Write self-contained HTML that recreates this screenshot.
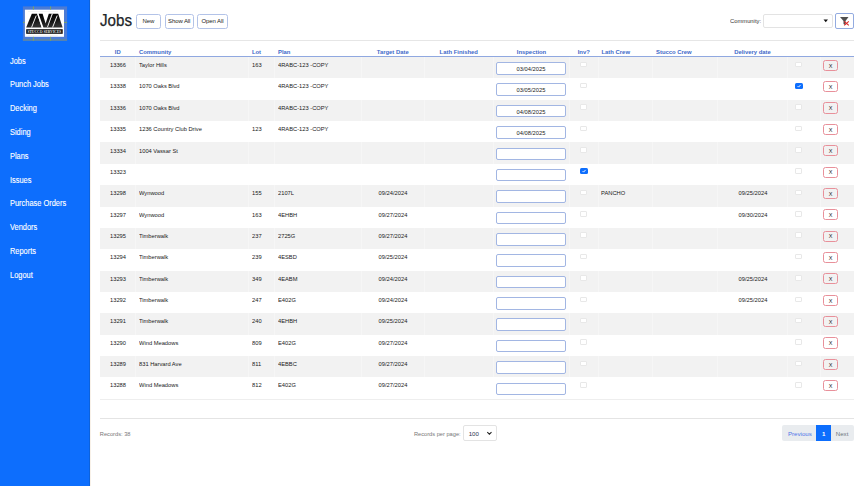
<!DOCTYPE html>
<html><head><meta charset="utf-8"><style>
html,body{margin:0;padding:0;}
body{width:864px;height:486px;overflow:hidden;position:relative;background:#fff;font-family:"Liberation Sans", sans-serif;}
</style></head><body>
<div style="position:absolute;left:0;top:0;width:90px;height:486px;background:#0d6efd;"></div>
<div style="position:absolute;left:89px;top:0;width:1px;height:486px;background:#0b62dd;"></div>
<div style="position:absolute;left:90px;top:0;width:1px;height:486px;background:#f8f1e8;"></div>
<svg style="position:absolute;left:22px;top:6px" width="46" height="36" viewBox="0 0 46 36">
<rect x="0.9" y="0.4" width="44.2" height="34.4" fill="#4c7bd4"/>
<rect x="0.9" y="33" width="44.2" height="1.8" fill="#5a85a8"/>
<rect x="2.9" y="3.7" width="39.1" height="27.1" fill="#fff"/>
<defs><linearGradient id="lg" x1="0" y1="0" x2="0.3" y2="1"><stop offset="0" stop-color="#000"/><stop offset="0.55" stop-color="#111"/><stop offset="1" stop-color="#303030"/></linearGradient></defs>
<g fill="url(#lg)">
<path d="M4.2 21.4 L9.8 7.8 L15.2 7.8 L19.6 21.4 Z"/>
<path d="M16.6 7.8 L20.6 7.8 L23.6 17.4 L26.8 7.8 L30.6 7.8 L25.8 21.6 L21.4 21.6 Z"/>
<path d="M25.2 21.4 L30.8 7.8 L36.2 7.8 L40.6 21.4 Z"/>
</g>
<g stroke="#fff" stroke-width="0.9" fill="none">
<path d="M14.2 9.6 L9.6 21.4"/><path d="M35.2 9.6 L30.6 21.4"/>
<path d="M15.6 7.8 L20.2 21.4"/><path d="M30.2 7.8 L25.4 21.4"/>
</g>
<rect x="4.2" y="23.2" width="36.5" height="4.6" fill="#0a0a0a"/>
<text x="5.4" y="26.9" font-family="Liberation Serif" font-weight="bold" font-size="3.3" fill="#e8e8e8" textLength="34" lengthAdjust="spacingAndGlyphs">STUCCO SERVICES</text>
<g fill="#ccc" opacity="0.35"><rect x="6" y="5" width="30" height="0.6"/><rect x="6" y="29" width="30" height="0.6"/></g>
<g stroke="#86ad4a" stroke-width="0.8"><line x1="11.4" y1="0.4" x2="11.4" y2="3.7"/><line x1="28.6" y1="0.4" x2="28.6" y2="3.7"/><line x1="11.4" y1="30.8" x2="11.4" y2="34.8"/><line x1="28.6" y1="30.8" x2="28.6" y2="34.8"/><line x1="0.9" y1="16.4" x2="2.9" y2="16.4"/><line x1="42" y1="16.4" x2="45.1" y2="16.4"/></g>
</svg>
<div style="position:absolute;left:9.60px;top:56.57px;font-size:8.3px;line-height:8.3px;color:#fff;white-space:nowrap;transform:scaleX(0.895);transform-origin:0 0;-webkit-text-stroke:0.12px #fff;">Jobs</div>
<div style="position:absolute;left:9.60px;top:80.37px;font-size:8.3px;line-height:8.3px;color:#fff;white-space:nowrap;transform:scaleX(0.895);transform-origin:0 0;-webkit-text-stroke:0.12px #fff;">Punch Jobs</div>
<div style="position:absolute;left:9.60px;top:104.17px;font-size:8.3px;line-height:8.3px;color:#fff;white-space:nowrap;transform:scaleX(0.895);transform-origin:0 0;-webkit-text-stroke:0.12px #fff;">Decking</div>
<div style="position:absolute;left:9.60px;top:127.97px;font-size:8.3px;line-height:8.3px;color:#fff;white-space:nowrap;transform:scaleX(0.895);transform-origin:0 0;-webkit-text-stroke:0.12px #fff;">Siding</div>
<div style="position:absolute;left:9.60px;top:151.77px;font-size:8.3px;line-height:8.3px;color:#fff;white-space:nowrap;transform:scaleX(0.895);transform-origin:0 0;-webkit-text-stroke:0.12px #fff;">Plans</div>
<div style="position:absolute;left:9.60px;top:175.57px;font-size:8.3px;line-height:8.3px;color:#fff;white-space:nowrap;transform:scaleX(0.895);transform-origin:0 0;-webkit-text-stroke:0.12px #fff;">Issues</div>
<div style="position:absolute;left:9.60px;top:199.37px;font-size:8.3px;line-height:8.3px;color:#fff;white-space:nowrap;transform:scaleX(0.895);transform-origin:0 0;-webkit-text-stroke:0.12px #fff;">Purchase Orders</div>
<div style="position:absolute;left:9.60px;top:223.17px;font-size:8.3px;line-height:8.3px;color:#fff;white-space:nowrap;transform:scaleX(0.895);transform-origin:0 0;-webkit-text-stroke:0.12px #fff;">Vendors</div>
<div style="position:absolute;left:9.60px;top:246.97px;font-size:8.3px;line-height:8.3px;color:#fff;white-space:nowrap;transform:scaleX(0.895);transform-origin:0 0;-webkit-text-stroke:0.12px #fff;">Reports</div>
<div style="position:absolute;left:9.60px;top:270.77px;font-size:8.3px;line-height:8.3px;color:#fff;white-space:nowrap;transform:scaleX(0.895);transform-origin:0 0;-webkit-text-stroke:0.12px #fff;">Logout</div>
<div style="position:absolute;left:99.60px;top:11.92px;font-size:16.4px;line-height:16.4px;color:#212529;white-space:nowrap;transform:scaleX(0.925);transform-origin:0 0;-webkit-text-stroke:0.25px #212529;">Jobs</div>
<div style="position:absolute;left:136px;top:14px;width:24.80000000000001px;height:15px;box-sizing:border-box;border:1px solid #b3c3e8;border-radius:2.5px;background:#fff;"></div><div style="position:absolute;left:48.40px;width:200px;text-align:center;top:18.42px;font-size:6.0px;line-height:6.0px;color:#222;white-space:nowrap;letter-spacing:-0.1px;">New</div>
<div style="position:absolute;left:164.6px;top:14px;width:29.200000000000017px;height:15px;box-sizing:border-box;border:1px solid #b3c3e8;border-radius:2.5px;background:#fff;"></div><div style="position:absolute;left:79.20px;width:200px;text-align:center;top:18.42px;font-size:6.0px;line-height:6.0px;color:#222;white-space:nowrap;letter-spacing:-0.1px;">Show All</div>
<div style="position:absolute;left:197.3px;top:14px;width:30.399999999999977px;height:15px;box-sizing:border-box;border:1px solid #b3c3e8;border-radius:2.5px;background:#fff;"></div><div style="position:absolute;left:112.50px;width:200px;text-align:center;top:18.42px;font-size:6.0px;line-height:6.0px;color:#222;white-space:nowrap;letter-spacing:-0.1px;">Open All</div>
<div style="position:absolute;left:730.30px;top:18.22px;font-size:6.0px;line-height:6.0px;color:#333;white-space:nowrap;transform:scaleX(0.97);transform-origin:0 0;">Community:</div>
<div style="position:absolute;left:763.3px;top:14.3px;width:70px;height:13.4px;box-sizing:border-box;border:1px solid #e3e3e3;border-radius:2px;background:#fff;"></div>
<svg style="position:absolute;left:823px;top:19px" width="6" height="4" viewBox="0 0 6 4"><path d="M0.5 0.5 L5 0.5 L2.75 3.2 Z" fill="#111"/></svg>
<div style="position:absolute;left:834.5px;top:13px;width:19.3px;height:15.8px;box-sizing:border-box;border:1px solid #93abe0;border-radius:2px;background:#fff;"></div>
<svg style="position:absolute;left:838px;top:16px" width="14" height="11" viewBox="0 0 14 11"><path d="M2 1 L10.5 1 L7.5 5 L7.5 9 L5.5 8 L5.5 5 Z" fill="#505050"/><path d="M6.2 5.3 L10.8 9.3 M10.8 5.3 L6.2 9.3" stroke="#dd2828" stroke-width="1.1"/></svg>
<div style="position:absolute;left:100px;top:40px;width:754px;height:1px;background:#e6e6e6;"></div>
<div style="position:absolute;left:17.75px;width:200px;text-align:center;top:49.81px;font-size:5.9px;line-height:5.9px;color:#4169c9;white-space:nowrap;font-weight:bold;">ID</div>
<div style="position:absolute;left:139.00px;top:49.81px;font-size:5.9px;line-height:5.9px;color:#4169c9;white-space:nowrap;font-weight:bold;">Community</div>
<div style="position:absolute;left:251.90px;top:49.81px;font-size:5.9px;line-height:5.9px;color:#4169c9;white-space:nowrap;font-weight:bold;">Lot</div>
<div style="position:absolute;left:278.00px;top:49.81px;font-size:5.9px;line-height:5.9px;color:#4169c9;white-space:nowrap;font-weight:bold;">Plan</div>
<div style="position:absolute;left:292.75px;width:200px;text-align:center;top:49.81px;font-size:5.9px;line-height:5.9px;color:#4169c9;white-space:nowrap;font-weight:bold;">Target Date</div>
<div style="position:absolute;left:358.75px;width:200px;text-align:center;top:49.81px;font-size:5.9px;line-height:5.9px;color:#4169c9;white-space:nowrap;font-weight:bold;">Lath Finished</div>
<div style="position:absolute;left:431.50px;width:200px;text-align:center;top:49.81px;font-size:5.9px;line-height:5.9px;color:#4169c9;white-space:nowrap;font-weight:bold;">Inspection</div>
<div style="position:absolute;left:483.75px;width:200px;text-align:center;top:49.81px;font-size:5.9px;line-height:5.9px;color:#4169c9;white-space:nowrap;font-weight:bold;">Inv?</div>
<div style="position:absolute;left:601.50px;top:49.81px;font-size:5.9px;line-height:5.9px;color:#4169c9;white-space:nowrap;font-weight:bold;">Lath Crew</div>
<div style="position:absolute;left:656.00px;top:49.81px;font-size:5.9px;line-height:5.9px;color:#4169c9;white-space:nowrap;font-weight:bold;">Stucco Crew</div>
<div style="position:absolute;left:652.50px;width:200px;text-align:center;top:49.81px;font-size:5.9px;line-height:5.9px;color:#4169c9;white-space:nowrap;font-weight:bold;">Delivery date</div>
<div style="position:absolute;left:100px;top:56px;width:754px;height:1px;background:#90a8e0;"></div>
<div style="position:absolute;left:100px;top:57.00px;width:754px;height:21.36px;background:#f2f2f2;"></div>
<div style="position:absolute;left:135.00px;top:57.00px;width:1px;height:21.36px;background:#f6f6f6;"></div>
<div style="position:absolute;left:247.90px;top:57.00px;width:1px;height:21.36px;background:#f6f6f6;"></div>
<div style="position:absolute;left:274.00px;top:57.00px;width:1px;height:21.36px;background:#f6f6f6;"></div>
<div style="position:absolute;left:361.00px;top:57.00px;width:1px;height:21.36px;background:#f6f6f6;"></div>
<div style="position:absolute;left:423.50px;top:57.00px;width:1px;height:21.36px;background:#f6f6f6;"></div>
<div style="position:absolute;left:493.00px;top:57.00px;width:1px;height:21.36px;background:#f6f6f6;"></div>
<div style="position:absolute;left:569.00px;top:57.00px;width:1px;height:21.36px;background:#f6f6f6;"></div>
<div style="position:absolute;left:597.50px;top:57.00px;width:1px;height:21.36px;background:#f6f6f6;"></div>
<div style="position:absolute;left:652.00px;top:57.00px;width:1px;height:21.36px;background:#f6f6f6;"></div>
<div style="position:absolute;left:717.00px;top:57.00px;width:1px;height:21.36px;background:#f6f6f6;"></div>
<div style="position:absolute;left:787.00px;top:57.00px;width:1px;height:21.36px;background:#f6f6f6;"></div>
<div style="position:absolute;left:820.00px;top:57.00px;width:1px;height:21.36px;background:#f6f6f6;"></div>
<div style="position:absolute;left:17.75px;width:200px;text-align:center;top:62.09px;font-size:6.15px;line-height:6.15px;color:#1a1a1a;white-space:nowrap;transform:scaleX(0.935);transform-origin:50% 0;">13366</div>
<div style="position:absolute;left:139.30px;top:62.09px;font-size:6.15px;line-height:6.15px;color:#1a1a1a;white-space:nowrap;transform:scaleX(0.935);transform-origin:0 0;">Taylor Hills</div>
<div style="position:absolute;left:252.00px;top:62.09px;font-size:6.15px;line-height:6.15px;color:#1a1a1a;white-space:nowrap;transform:scaleX(0.935);transform-origin:0 0;">163</div>
<div style="position:absolute;left:277.50px;top:62.09px;font-size:6.15px;line-height:6.15px;color:#1a1a1a;white-space:nowrap;transform:scaleX(0.935);transform-origin:0 0;">4RABC-123 -COPY</div>
<div style="position:absolute;left:496px;top:62.10px;width:70px;height:12.6px;box-sizing:border-box;border:1px solid #a2b6e3;border-radius:2px;background:#fff;"></div>
<div style="position:absolute;left:431.20px;width:200px;text-align:center;top:65.99px;font-size:6.15px;line-height:6.15px;color:#222;white-space:nowrap;transform:scaleX(0.935);transform-origin:50% 0;">03/04/2025</div>
<div style="position:absolute;left:580.3px;top:61.60px;width:7.2px;height:5.5px;box-sizing:border-box;border:0.5px solid #e8e8e8;border-radius:1px;background:#fff;"></div>
<div style="position:absolute;left:794.8px;top:61.60px;width:7.2px;height:5.5px;box-sizing:border-box;border:0.5px solid #e8e8e8;border-radius:1px;background:#fff;"></div>
<div style="position:absolute;left:823.2px;top:59.70px;width:14.6px;height:11.2px;box-sizing:border-box;border:1px solid #e8909a;border-radius:2.5px;"></div>
<div style="position:absolute;left:730.50px;width:200px;text-align:center;top:63.54px;font-size:5.5px;line-height:5.5px;color:#222;white-space:nowrap;">X</div>
<div style="position:absolute;left:100px;top:78.36px;width:754px;height:21.36px;background:#fff;"></div>
<div style="position:absolute;left:17.75px;width:200px;text-align:center;top:83.45px;font-size:6.15px;line-height:6.15px;color:#1a1a1a;white-space:nowrap;transform:scaleX(0.935);transform-origin:50% 0;">13338</div>
<div style="position:absolute;left:139.30px;top:83.45px;font-size:6.15px;line-height:6.15px;color:#1a1a1a;white-space:nowrap;transform:scaleX(0.935);transform-origin:0 0;">1070 Oaks Blvd</div>
<div style="position:absolute;left:277.50px;top:83.45px;font-size:6.15px;line-height:6.15px;color:#1a1a1a;white-space:nowrap;transform:scaleX(0.935);transform-origin:0 0;">4RABC-123 -COPY</div>
<div style="position:absolute;left:496px;top:83.46px;width:70px;height:12.6px;box-sizing:border-box;border:1px solid #a2b6e3;border-radius:2px;background:#fff;"></div>
<div style="position:absolute;left:431.20px;width:200px;text-align:center;top:87.35px;font-size:6.15px;line-height:6.15px;color:#222;white-space:nowrap;transform:scaleX(0.935);transform-origin:50% 0;">03/05/2025</div>
<div style="position:absolute;left:580.3px;top:82.96px;width:7.2px;height:5.5px;box-sizing:border-box;border:0.5px solid #e8e8e8;border-radius:1px;background:#fff;"></div>
<div style="position:absolute;left:794.6px;top:82.86px;width:8px;height:6px;"><svg width="8" height="6" viewBox="0 0 8 6" style="position:absolute;left:0;top:0"><rect x="0" y="0" width="8" height="6" rx="1.5" fill="#0d6efd"/><path d="M2.6 3.1 L3.6 4.1 L5.6 1.9" stroke="#fff" stroke-width="0.9" fill="none"/></svg></div>
<div style="position:absolute;left:823.2px;top:81.06px;width:14.6px;height:11.2px;box-sizing:border-box;border:1px solid #e8909a;border-radius:2.5px;"></div>
<div style="position:absolute;left:730.50px;width:200px;text-align:center;top:84.90px;font-size:5.5px;line-height:5.5px;color:#222;white-space:nowrap;">X</div>
<div style="position:absolute;left:100px;top:99.72px;width:754px;height:21.36px;background:#f2f2f2;"></div>
<div style="position:absolute;left:135.00px;top:99.72px;width:1px;height:21.36px;background:#f6f6f6;"></div>
<div style="position:absolute;left:247.90px;top:99.72px;width:1px;height:21.36px;background:#f6f6f6;"></div>
<div style="position:absolute;left:274.00px;top:99.72px;width:1px;height:21.36px;background:#f6f6f6;"></div>
<div style="position:absolute;left:361.00px;top:99.72px;width:1px;height:21.36px;background:#f6f6f6;"></div>
<div style="position:absolute;left:423.50px;top:99.72px;width:1px;height:21.36px;background:#f6f6f6;"></div>
<div style="position:absolute;left:493.00px;top:99.72px;width:1px;height:21.36px;background:#f6f6f6;"></div>
<div style="position:absolute;left:569.00px;top:99.72px;width:1px;height:21.36px;background:#f6f6f6;"></div>
<div style="position:absolute;left:597.50px;top:99.72px;width:1px;height:21.36px;background:#f6f6f6;"></div>
<div style="position:absolute;left:652.00px;top:99.72px;width:1px;height:21.36px;background:#f6f6f6;"></div>
<div style="position:absolute;left:717.00px;top:99.72px;width:1px;height:21.36px;background:#f6f6f6;"></div>
<div style="position:absolute;left:787.00px;top:99.72px;width:1px;height:21.36px;background:#f6f6f6;"></div>
<div style="position:absolute;left:820.00px;top:99.72px;width:1px;height:21.36px;background:#f6f6f6;"></div>
<div style="position:absolute;left:17.75px;width:200px;text-align:center;top:104.81px;font-size:6.15px;line-height:6.15px;color:#1a1a1a;white-space:nowrap;transform:scaleX(0.935);transform-origin:50% 0;">13336</div>
<div style="position:absolute;left:139.30px;top:104.81px;font-size:6.15px;line-height:6.15px;color:#1a1a1a;white-space:nowrap;transform:scaleX(0.935);transform-origin:0 0;">1070 Oaks Blvd</div>
<div style="position:absolute;left:277.50px;top:104.81px;font-size:6.15px;line-height:6.15px;color:#1a1a1a;white-space:nowrap;transform:scaleX(0.935);transform-origin:0 0;">4RABC-123 -COPY</div>
<div style="position:absolute;left:496px;top:104.82px;width:70px;height:12.6px;box-sizing:border-box;border:1px solid #a2b6e3;border-radius:2px;background:#fff;"></div>
<div style="position:absolute;left:431.20px;width:200px;text-align:center;top:108.71px;font-size:6.15px;line-height:6.15px;color:#222;white-space:nowrap;transform:scaleX(0.935);transform-origin:50% 0;">04/08/2025</div>
<div style="position:absolute;left:580.3px;top:104.32px;width:7.2px;height:5.5px;box-sizing:border-box;border:0.5px solid #e8e8e8;border-radius:1px;background:#fff;"></div>
<div style="position:absolute;left:794.8px;top:104.32px;width:7.2px;height:5.5px;box-sizing:border-box;border:0.5px solid #e8e8e8;border-radius:1px;background:#fff;"></div>
<div style="position:absolute;left:823.2px;top:102.42px;width:14.6px;height:11.2px;box-sizing:border-box;border:1px solid #e8909a;border-radius:2.5px;"></div>
<div style="position:absolute;left:730.50px;width:200px;text-align:center;top:106.26px;font-size:5.5px;line-height:5.5px;color:#222;white-space:nowrap;">X</div>
<div style="position:absolute;left:100px;top:121.08px;width:754px;height:21.36px;background:#fff;"></div>
<div style="position:absolute;left:17.75px;width:200px;text-align:center;top:126.17px;font-size:6.15px;line-height:6.15px;color:#1a1a1a;white-space:nowrap;transform:scaleX(0.935);transform-origin:50% 0;">13335</div>
<div style="position:absolute;left:139.30px;top:126.17px;font-size:6.15px;line-height:6.15px;color:#1a1a1a;white-space:nowrap;transform:scaleX(0.935);transform-origin:0 0;">1236 Country Club Drive</div>
<div style="position:absolute;left:252.00px;top:126.17px;font-size:6.15px;line-height:6.15px;color:#1a1a1a;white-space:nowrap;transform:scaleX(0.935);transform-origin:0 0;">123</div>
<div style="position:absolute;left:277.50px;top:126.17px;font-size:6.15px;line-height:6.15px;color:#1a1a1a;white-space:nowrap;transform:scaleX(0.935);transform-origin:0 0;">4RABC-123 -COPY</div>
<div style="position:absolute;left:496px;top:126.18px;width:70px;height:12.6px;box-sizing:border-box;border:1px solid #a2b6e3;border-radius:2px;background:#fff;"></div>
<div style="position:absolute;left:431.20px;width:200px;text-align:center;top:130.07px;font-size:6.15px;line-height:6.15px;color:#222;white-space:nowrap;transform:scaleX(0.935);transform-origin:50% 0;">04/08/2025</div>
<div style="position:absolute;left:580.3px;top:125.68px;width:7.2px;height:5.5px;box-sizing:border-box;border:0.5px solid #e8e8e8;border-radius:1px;background:#fff;"></div>
<div style="position:absolute;left:794.8px;top:125.68px;width:7.2px;height:5.5px;box-sizing:border-box;border:0.5px solid #e8e8e8;border-radius:1px;background:#fff;"></div>
<div style="position:absolute;left:823.2px;top:123.78px;width:14.6px;height:11.2px;box-sizing:border-box;border:1px solid #e8909a;border-radius:2.5px;"></div>
<div style="position:absolute;left:730.50px;width:200px;text-align:center;top:127.62px;font-size:5.5px;line-height:5.5px;color:#222;white-space:nowrap;">X</div>
<div style="position:absolute;left:100px;top:142.44px;width:754px;height:21.36px;background:#f2f2f2;"></div>
<div style="position:absolute;left:135.00px;top:142.44px;width:1px;height:21.36px;background:#f6f6f6;"></div>
<div style="position:absolute;left:247.90px;top:142.44px;width:1px;height:21.36px;background:#f6f6f6;"></div>
<div style="position:absolute;left:274.00px;top:142.44px;width:1px;height:21.36px;background:#f6f6f6;"></div>
<div style="position:absolute;left:361.00px;top:142.44px;width:1px;height:21.36px;background:#f6f6f6;"></div>
<div style="position:absolute;left:423.50px;top:142.44px;width:1px;height:21.36px;background:#f6f6f6;"></div>
<div style="position:absolute;left:493.00px;top:142.44px;width:1px;height:21.36px;background:#f6f6f6;"></div>
<div style="position:absolute;left:569.00px;top:142.44px;width:1px;height:21.36px;background:#f6f6f6;"></div>
<div style="position:absolute;left:597.50px;top:142.44px;width:1px;height:21.36px;background:#f6f6f6;"></div>
<div style="position:absolute;left:652.00px;top:142.44px;width:1px;height:21.36px;background:#f6f6f6;"></div>
<div style="position:absolute;left:717.00px;top:142.44px;width:1px;height:21.36px;background:#f6f6f6;"></div>
<div style="position:absolute;left:787.00px;top:142.44px;width:1px;height:21.36px;background:#f6f6f6;"></div>
<div style="position:absolute;left:820.00px;top:142.44px;width:1px;height:21.36px;background:#f6f6f6;"></div>
<div style="position:absolute;left:17.75px;width:200px;text-align:center;top:147.53px;font-size:6.15px;line-height:6.15px;color:#1a1a1a;white-space:nowrap;transform:scaleX(0.935);transform-origin:50% 0;">13334</div>
<div style="position:absolute;left:139.30px;top:147.53px;font-size:6.15px;line-height:6.15px;color:#1a1a1a;white-space:nowrap;transform:scaleX(0.935);transform-origin:0 0;">1004 Vassar St</div>
<div style="position:absolute;left:496px;top:147.54px;width:70px;height:12.6px;box-sizing:border-box;border:1px solid #a2b6e3;border-radius:2px;background:#fff;"></div>
<div style="position:absolute;left:580.3px;top:147.04px;width:7.2px;height:5.5px;box-sizing:border-box;border:0.5px solid #e8e8e8;border-radius:1px;background:#fff;"></div>
<div style="position:absolute;left:794.8px;top:147.04px;width:7.2px;height:5.5px;box-sizing:border-box;border:0.5px solid #e8e8e8;border-radius:1px;background:#fff;"></div>
<div style="position:absolute;left:823.2px;top:145.14px;width:14.6px;height:11.2px;box-sizing:border-box;border:1px solid #e8909a;border-radius:2.5px;"></div>
<div style="position:absolute;left:730.50px;width:200px;text-align:center;top:148.98px;font-size:5.5px;line-height:5.5px;color:#222;white-space:nowrap;">X</div>
<div style="position:absolute;left:100px;top:163.80px;width:754px;height:21.36px;background:#fff;"></div>
<div style="position:absolute;left:17.75px;width:200px;text-align:center;top:168.89px;font-size:6.15px;line-height:6.15px;color:#1a1a1a;white-space:nowrap;transform:scaleX(0.935);transform-origin:50% 0;">13323</div>
<div style="position:absolute;left:496px;top:168.90px;width:70px;height:12.6px;box-sizing:border-box;border:1px solid #a2b6e3;border-radius:2px;background:#fff;"></div>
<div style="position:absolute;left:580px;top:168.30px;width:8px;height:6px;"><svg width="8" height="6" viewBox="0 0 8 6" style="position:absolute;left:0;top:0"><rect x="0" y="0" width="8" height="6" rx="1.5" fill="#0d6efd"/><path d="M2.6 3.1 L3.6 4.1 L5.6 1.9" stroke="#fff" stroke-width="0.9" fill="none"/></svg></div>
<div style="position:absolute;left:794.8px;top:168.40px;width:7.2px;height:5.5px;box-sizing:border-box;border:0.5px solid #e8e8e8;border-radius:1px;background:#fff;"></div>
<div style="position:absolute;left:823.2px;top:166.50px;width:14.6px;height:11.2px;box-sizing:border-box;border:1px solid #e8909a;border-radius:2.5px;"></div>
<div style="position:absolute;left:730.50px;width:200px;text-align:center;top:170.34px;font-size:5.5px;line-height:5.5px;color:#222;white-space:nowrap;">X</div>
<div style="position:absolute;left:100px;top:185.16px;width:754px;height:21.36px;background:#f2f2f2;"></div>
<div style="position:absolute;left:135.00px;top:185.16px;width:1px;height:21.36px;background:#f6f6f6;"></div>
<div style="position:absolute;left:247.90px;top:185.16px;width:1px;height:21.36px;background:#f6f6f6;"></div>
<div style="position:absolute;left:274.00px;top:185.16px;width:1px;height:21.36px;background:#f6f6f6;"></div>
<div style="position:absolute;left:361.00px;top:185.16px;width:1px;height:21.36px;background:#f6f6f6;"></div>
<div style="position:absolute;left:423.50px;top:185.16px;width:1px;height:21.36px;background:#f6f6f6;"></div>
<div style="position:absolute;left:493.00px;top:185.16px;width:1px;height:21.36px;background:#f6f6f6;"></div>
<div style="position:absolute;left:569.00px;top:185.16px;width:1px;height:21.36px;background:#f6f6f6;"></div>
<div style="position:absolute;left:597.50px;top:185.16px;width:1px;height:21.36px;background:#f6f6f6;"></div>
<div style="position:absolute;left:652.00px;top:185.16px;width:1px;height:21.36px;background:#f6f6f6;"></div>
<div style="position:absolute;left:717.00px;top:185.16px;width:1px;height:21.36px;background:#f6f6f6;"></div>
<div style="position:absolute;left:787.00px;top:185.16px;width:1px;height:21.36px;background:#f6f6f6;"></div>
<div style="position:absolute;left:820.00px;top:185.16px;width:1px;height:21.36px;background:#f6f6f6;"></div>
<div style="position:absolute;left:17.75px;width:200px;text-align:center;top:190.25px;font-size:6.15px;line-height:6.15px;color:#1a1a1a;white-space:nowrap;transform:scaleX(0.935);transform-origin:50% 0;">13298</div>
<div style="position:absolute;left:139.30px;top:190.25px;font-size:6.15px;line-height:6.15px;color:#1a1a1a;white-space:nowrap;transform:scaleX(0.935);transform-origin:0 0;">Wynwood</div>
<div style="position:absolute;left:252.00px;top:190.25px;font-size:6.15px;line-height:6.15px;color:#1a1a1a;white-space:nowrap;transform:scaleX(0.935);transform-origin:0 0;">155</div>
<div style="position:absolute;left:277.50px;top:190.25px;font-size:6.15px;line-height:6.15px;color:#1a1a1a;white-space:nowrap;transform:scaleX(0.935);transform-origin:0 0;">2107L</div>
<div style="position:absolute;left:292.75px;width:200px;text-align:center;top:190.25px;font-size:6.15px;line-height:6.15px;color:#1a1a1a;white-space:nowrap;transform:scaleX(0.935);transform-origin:50% 0;">09/24/2024</div>
<div style="position:absolute;left:496px;top:190.26px;width:70px;height:12.6px;box-sizing:border-box;border:1px solid #a2b6e3;border-radius:2px;background:#fff;"></div>
<div style="position:absolute;left:580.3px;top:189.76px;width:7.2px;height:5.5px;box-sizing:border-box;border:0.5px solid #e8e8e8;border-radius:1px;background:#fff;"></div>
<div style="position:absolute;left:601.30px;top:190.25px;font-size:6.15px;line-height:6.15px;color:#1a1a1a;white-space:nowrap;transform:scaleX(0.935);transform-origin:0 0;">PANCHO</div>
<div style="position:absolute;left:652.50px;width:200px;text-align:center;top:190.25px;font-size:6.15px;line-height:6.15px;color:#1a1a1a;white-space:nowrap;transform:scaleX(0.935);transform-origin:50% 0;">09/25/2024</div>
<div style="position:absolute;left:794.8px;top:189.76px;width:7.2px;height:5.5px;box-sizing:border-box;border:0.5px solid #e8e8e8;border-radius:1px;background:#fff;"></div>
<div style="position:absolute;left:823.2px;top:187.86px;width:14.6px;height:11.2px;box-sizing:border-box;border:1px solid #e8909a;border-radius:2.5px;"></div>
<div style="position:absolute;left:730.50px;width:200px;text-align:center;top:191.70px;font-size:5.5px;line-height:5.5px;color:#222;white-space:nowrap;">X</div>
<div style="position:absolute;left:100px;top:206.52px;width:754px;height:21.36px;background:#fff;"></div>
<div style="position:absolute;left:17.75px;width:200px;text-align:center;top:211.61px;font-size:6.15px;line-height:6.15px;color:#1a1a1a;white-space:nowrap;transform:scaleX(0.935);transform-origin:50% 0;">13297</div>
<div style="position:absolute;left:139.30px;top:211.61px;font-size:6.15px;line-height:6.15px;color:#1a1a1a;white-space:nowrap;transform:scaleX(0.935);transform-origin:0 0;">Wynwood</div>
<div style="position:absolute;left:252.00px;top:211.61px;font-size:6.15px;line-height:6.15px;color:#1a1a1a;white-space:nowrap;transform:scaleX(0.935);transform-origin:0 0;">163</div>
<div style="position:absolute;left:277.50px;top:211.61px;font-size:6.15px;line-height:6.15px;color:#1a1a1a;white-space:nowrap;transform:scaleX(0.935);transform-origin:0 0;">4EHBH</div>
<div style="position:absolute;left:292.75px;width:200px;text-align:center;top:211.61px;font-size:6.15px;line-height:6.15px;color:#1a1a1a;white-space:nowrap;transform:scaleX(0.935);transform-origin:50% 0;">09/27/2024</div>
<div style="position:absolute;left:496px;top:211.62px;width:70px;height:12.6px;box-sizing:border-box;border:1px solid #a2b6e3;border-radius:2px;background:#fff;"></div>
<div style="position:absolute;left:580.3px;top:211.12px;width:7.2px;height:5.5px;box-sizing:border-box;border:0.5px solid #e8e8e8;border-radius:1px;background:#fff;"></div>
<div style="position:absolute;left:652.50px;width:200px;text-align:center;top:211.61px;font-size:6.15px;line-height:6.15px;color:#1a1a1a;white-space:nowrap;transform:scaleX(0.935);transform-origin:50% 0;">09/30/2024</div>
<div style="position:absolute;left:794.8px;top:211.12px;width:7.2px;height:5.5px;box-sizing:border-box;border:0.5px solid #e8e8e8;border-radius:1px;background:#fff;"></div>
<div style="position:absolute;left:823.2px;top:209.22px;width:14.6px;height:11.2px;box-sizing:border-box;border:1px solid #e8909a;border-radius:2.5px;"></div>
<div style="position:absolute;left:730.50px;width:200px;text-align:center;top:213.06px;font-size:5.5px;line-height:5.5px;color:#222;white-space:nowrap;">X</div>
<div style="position:absolute;left:100px;top:227.88px;width:754px;height:21.36px;background:#f2f2f2;"></div>
<div style="position:absolute;left:135.00px;top:227.88px;width:1px;height:21.36px;background:#f6f6f6;"></div>
<div style="position:absolute;left:247.90px;top:227.88px;width:1px;height:21.36px;background:#f6f6f6;"></div>
<div style="position:absolute;left:274.00px;top:227.88px;width:1px;height:21.36px;background:#f6f6f6;"></div>
<div style="position:absolute;left:361.00px;top:227.88px;width:1px;height:21.36px;background:#f6f6f6;"></div>
<div style="position:absolute;left:423.50px;top:227.88px;width:1px;height:21.36px;background:#f6f6f6;"></div>
<div style="position:absolute;left:493.00px;top:227.88px;width:1px;height:21.36px;background:#f6f6f6;"></div>
<div style="position:absolute;left:569.00px;top:227.88px;width:1px;height:21.36px;background:#f6f6f6;"></div>
<div style="position:absolute;left:597.50px;top:227.88px;width:1px;height:21.36px;background:#f6f6f6;"></div>
<div style="position:absolute;left:652.00px;top:227.88px;width:1px;height:21.36px;background:#f6f6f6;"></div>
<div style="position:absolute;left:717.00px;top:227.88px;width:1px;height:21.36px;background:#f6f6f6;"></div>
<div style="position:absolute;left:787.00px;top:227.88px;width:1px;height:21.36px;background:#f6f6f6;"></div>
<div style="position:absolute;left:820.00px;top:227.88px;width:1px;height:21.36px;background:#f6f6f6;"></div>
<div style="position:absolute;left:17.75px;width:200px;text-align:center;top:232.97px;font-size:6.15px;line-height:6.15px;color:#1a1a1a;white-space:nowrap;transform:scaleX(0.935);transform-origin:50% 0;">13295</div>
<div style="position:absolute;left:139.30px;top:232.97px;font-size:6.15px;line-height:6.15px;color:#1a1a1a;white-space:nowrap;transform:scaleX(0.935);transform-origin:0 0;">Timberwalk</div>
<div style="position:absolute;left:252.00px;top:232.97px;font-size:6.15px;line-height:6.15px;color:#1a1a1a;white-space:nowrap;transform:scaleX(0.935);transform-origin:0 0;">237</div>
<div style="position:absolute;left:277.50px;top:232.97px;font-size:6.15px;line-height:6.15px;color:#1a1a1a;white-space:nowrap;transform:scaleX(0.935);transform-origin:0 0;">2725G</div>
<div style="position:absolute;left:292.75px;width:200px;text-align:center;top:232.97px;font-size:6.15px;line-height:6.15px;color:#1a1a1a;white-space:nowrap;transform:scaleX(0.935);transform-origin:50% 0;">09/27/2024</div>
<div style="position:absolute;left:496px;top:232.98px;width:70px;height:12.6px;box-sizing:border-box;border:1px solid #a2b6e3;border-radius:2px;background:#fff;"></div>
<div style="position:absolute;left:580.3px;top:232.48px;width:7.2px;height:5.5px;box-sizing:border-box;border:0.5px solid #e8e8e8;border-radius:1px;background:#fff;"></div>
<div style="position:absolute;left:794.8px;top:232.48px;width:7.2px;height:5.5px;box-sizing:border-box;border:0.5px solid #e8e8e8;border-radius:1px;background:#fff;"></div>
<div style="position:absolute;left:823.2px;top:230.58px;width:14.6px;height:11.2px;box-sizing:border-box;border:1px solid #e8909a;border-radius:2.5px;"></div>
<div style="position:absolute;left:730.50px;width:200px;text-align:center;top:234.42px;font-size:5.5px;line-height:5.5px;color:#222;white-space:nowrap;">X</div>
<div style="position:absolute;left:100px;top:249.24px;width:754px;height:21.36px;background:#fff;"></div>
<div style="position:absolute;left:17.75px;width:200px;text-align:center;top:254.33px;font-size:6.15px;line-height:6.15px;color:#1a1a1a;white-space:nowrap;transform:scaleX(0.935);transform-origin:50% 0;">13294</div>
<div style="position:absolute;left:139.30px;top:254.33px;font-size:6.15px;line-height:6.15px;color:#1a1a1a;white-space:nowrap;transform:scaleX(0.935);transform-origin:0 0;">Timberwalk</div>
<div style="position:absolute;left:252.00px;top:254.33px;font-size:6.15px;line-height:6.15px;color:#1a1a1a;white-space:nowrap;transform:scaleX(0.935);transform-origin:0 0;">239</div>
<div style="position:absolute;left:277.50px;top:254.33px;font-size:6.15px;line-height:6.15px;color:#1a1a1a;white-space:nowrap;transform:scaleX(0.935);transform-origin:0 0;">4ESBD</div>
<div style="position:absolute;left:292.75px;width:200px;text-align:center;top:254.33px;font-size:6.15px;line-height:6.15px;color:#1a1a1a;white-space:nowrap;transform:scaleX(0.935);transform-origin:50% 0;">09/25/2024</div>
<div style="position:absolute;left:496px;top:254.34px;width:70px;height:12.6px;box-sizing:border-box;border:1px solid #a2b6e3;border-radius:2px;background:#fff;"></div>
<div style="position:absolute;left:580.3px;top:253.84px;width:7.2px;height:5.5px;box-sizing:border-box;border:0.5px solid #e8e8e8;border-radius:1px;background:#fff;"></div>
<div style="position:absolute;left:794.8px;top:253.84px;width:7.2px;height:5.5px;box-sizing:border-box;border:0.5px solid #e8e8e8;border-radius:1px;background:#fff;"></div>
<div style="position:absolute;left:823.2px;top:251.94px;width:14.6px;height:11.2px;box-sizing:border-box;border:1px solid #e8909a;border-radius:2.5px;"></div>
<div style="position:absolute;left:730.50px;width:200px;text-align:center;top:255.78px;font-size:5.5px;line-height:5.5px;color:#222;white-space:nowrap;">X</div>
<div style="position:absolute;left:100px;top:270.60px;width:754px;height:21.36px;background:#f2f2f2;"></div>
<div style="position:absolute;left:135.00px;top:270.60px;width:1px;height:21.36px;background:#f6f6f6;"></div>
<div style="position:absolute;left:247.90px;top:270.60px;width:1px;height:21.36px;background:#f6f6f6;"></div>
<div style="position:absolute;left:274.00px;top:270.60px;width:1px;height:21.36px;background:#f6f6f6;"></div>
<div style="position:absolute;left:361.00px;top:270.60px;width:1px;height:21.36px;background:#f6f6f6;"></div>
<div style="position:absolute;left:423.50px;top:270.60px;width:1px;height:21.36px;background:#f6f6f6;"></div>
<div style="position:absolute;left:493.00px;top:270.60px;width:1px;height:21.36px;background:#f6f6f6;"></div>
<div style="position:absolute;left:569.00px;top:270.60px;width:1px;height:21.36px;background:#f6f6f6;"></div>
<div style="position:absolute;left:597.50px;top:270.60px;width:1px;height:21.36px;background:#f6f6f6;"></div>
<div style="position:absolute;left:652.00px;top:270.60px;width:1px;height:21.36px;background:#f6f6f6;"></div>
<div style="position:absolute;left:717.00px;top:270.60px;width:1px;height:21.36px;background:#f6f6f6;"></div>
<div style="position:absolute;left:787.00px;top:270.60px;width:1px;height:21.36px;background:#f6f6f6;"></div>
<div style="position:absolute;left:820.00px;top:270.60px;width:1px;height:21.36px;background:#f6f6f6;"></div>
<div style="position:absolute;left:17.75px;width:200px;text-align:center;top:275.69px;font-size:6.15px;line-height:6.15px;color:#1a1a1a;white-space:nowrap;transform:scaleX(0.935);transform-origin:50% 0;">13293</div>
<div style="position:absolute;left:139.30px;top:275.69px;font-size:6.15px;line-height:6.15px;color:#1a1a1a;white-space:nowrap;transform:scaleX(0.935);transform-origin:0 0;">Timberwalk</div>
<div style="position:absolute;left:252.00px;top:275.69px;font-size:6.15px;line-height:6.15px;color:#1a1a1a;white-space:nowrap;transform:scaleX(0.935);transform-origin:0 0;">349</div>
<div style="position:absolute;left:277.50px;top:275.69px;font-size:6.15px;line-height:6.15px;color:#1a1a1a;white-space:nowrap;transform:scaleX(0.935);transform-origin:0 0;">4EABM</div>
<div style="position:absolute;left:292.75px;width:200px;text-align:center;top:275.69px;font-size:6.15px;line-height:6.15px;color:#1a1a1a;white-space:nowrap;transform:scaleX(0.935);transform-origin:50% 0;">09/24/2024</div>
<div style="position:absolute;left:496px;top:275.70px;width:70px;height:12.6px;box-sizing:border-box;border:1px solid #a2b6e3;border-radius:2px;background:#fff;"></div>
<div style="position:absolute;left:580.3px;top:275.20px;width:7.2px;height:5.5px;box-sizing:border-box;border:0.5px solid #e8e8e8;border-radius:1px;background:#fff;"></div>
<div style="position:absolute;left:652.50px;width:200px;text-align:center;top:275.69px;font-size:6.15px;line-height:6.15px;color:#1a1a1a;white-space:nowrap;transform:scaleX(0.935);transform-origin:50% 0;">09/25/2024</div>
<div style="position:absolute;left:794.8px;top:275.20px;width:7.2px;height:5.5px;box-sizing:border-box;border:0.5px solid #e8e8e8;border-radius:1px;background:#fff;"></div>
<div style="position:absolute;left:823.2px;top:273.30px;width:14.6px;height:11.2px;box-sizing:border-box;border:1px solid #e8909a;border-radius:2.5px;"></div>
<div style="position:absolute;left:730.50px;width:200px;text-align:center;top:277.14px;font-size:5.5px;line-height:5.5px;color:#222;white-space:nowrap;">X</div>
<div style="position:absolute;left:100px;top:291.96px;width:754px;height:21.36px;background:#fff;"></div>
<div style="position:absolute;left:17.75px;width:200px;text-align:center;top:297.05px;font-size:6.15px;line-height:6.15px;color:#1a1a1a;white-space:nowrap;transform:scaleX(0.935);transform-origin:50% 0;">13292</div>
<div style="position:absolute;left:139.30px;top:297.05px;font-size:6.15px;line-height:6.15px;color:#1a1a1a;white-space:nowrap;transform:scaleX(0.935);transform-origin:0 0;">Timberwalk</div>
<div style="position:absolute;left:252.00px;top:297.05px;font-size:6.15px;line-height:6.15px;color:#1a1a1a;white-space:nowrap;transform:scaleX(0.935);transform-origin:0 0;">247</div>
<div style="position:absolute;left:277.50px;top:297.05px;font-size:6.15px;line-height:6.15px;color:#1a1a1a;white-space:nowrap;transform:scaleX(0.935);transform-origin:0 0;">E402G</div>
<div style="position:absolute;left:292.75px;width:200px;text-align:center;top:297.05px;font-size:6.15px;line-height:6.15px;color:#1a1a1a;white-space:nowrap;transform:scaleX(0.935);transform-origin:50% 0;">09/24/2024</div>
<div style="position:absolute;left:496px;top:297.06px;width:70px;height:12.6px;box-sizing:border-box;border:1px solid #a2b6e3;border-radius:2px;background:#fff;"></div>
<div style="position:absolute;left:580.3px;top:296.56px;width:7.2px;height:5.5px;box-sizing:border-box;border:0.5px solid #e8e8e8;border-radius:1px;background:#fff;"></div>
<div style="position:absolute;left:652.50px;width:200px;text-align:center;top:297.05px;font-size:6.15px;line-height:6.15px;color:#1a1a1a;white-space:nowrap;transform:scaleX(0.935);transform-origin:50% 0;">09/25/2024</div>
<div style="position:absolute;left:794.8px;top:296.56px;width:7.2px;height:5.5px;box-sizing:border-box;border:0.5px solid #e8e8e8;border-radius:1px;background:#fff;"></div>
<div style="position:absolute;left:823.2px;top:294.66px;width:14.6px;height:11.2px;box-sizing:border-box;border:1px solid #e8909a;border-radius:2.5px;"></div>
<div style="position:absolute;left:730.50px;width:200px;text-align:center;top:298.50px;font-size:5.5px;line-height:5.5px;color:#222;white-space:nowrap;">X</div>
<div style="position:absolute;left:100px;top:313.32px;width:754px;height:21.36px;background:#f2f2f2;"></div>
<div style="position:absolute;left:135.00px;top:313.32px;width:1px;height:21.36px;background:#f6f6f6;"></div>
<div style="position:absolute;left:247.90px;top:313.32px;width:1px;height:21.36px;background:#f6f6f6;"></div>
<div style="position:absolute;left:274.00px;top:313.32px;width:1px;height:21.36px;background:#f6f6f6;"></div>
<div style="position:absolute;left:361.00px;top:313.32px;width:1px;height:21.36px;background:#f6f6f6;"></div>
<div style="position:absolute;left:423.50px;top:313.32px;width:1px;height:21.36px;background:#f6f6f6;"></div>
<div style="position:absolute;left:493.00px;top:313.32px;width:1px;height:21.36px;background:#f6f6f6;"></div>
<div style="position:absolute;left:569.00px;top:313.32px;width:1px;height:21.36px;background:#f6f6f6;"></div>
<div style="position:absolute;left:597.50px;top:313.32px;width:1px;height:21.36px;background:#f6f6f6;"></div>
<div style="position:absolute;left:652.00px;top:313.32px;width:1px;height:21.36px;background:#f6f6f6;"></div>
<div style="position:absolute;left:717.00px;top:313.32px;width:1px;height:21.36px;background:#f6f6f6;"></div>
<div style="position:absolute;left:787.00px;top:313.32px;width:1px;height:21.36px;background:#f6f6f6;"></div>
<div style="position:absolute;left:820.00px;top:313.32px;width:1px;height:21.36px;background:#f6f6f6;"></div>
<div style="position:absolute;left:17.75px;width:200px;text-align:center;top:318.41px;font-size:6.15px;line-height:6.15px;color:#1a1a1a;white-space:nowrap;transform:scaleX(0.935);transform-origin:50% 0;">13291</div>
<div style="position:absolute;left:139.30px;top:318.41px;font-size:6.15px;line-height:6.15px;color:#1a1a1a;white-space:nowrap;transform:scaleX(0.935);transform-origin:0 0;">Timberwalk</div>
<div style="position:absolute;left:252.00px;top:318.41px;font-size:6.15px;line-height:6.15px;color:#1a1a1a;white-space:nowrap;transform:scaleX(0.935);transform-origin:0 0;">240</div>
<div style="position:absolute;left:277.50px;top:318.41px;font-size:6.15px;line-height:6.15px;color:#1a1a1a;white-space:nowrap;transform:scaleX(0.935);transform-origin:0 0;">4EHBH</div>
<div style="position:absolute;left:292.75px;width:200px;text-align:center;top:318.41px;font-size:6.15px;line-height:6.15px;color:#1a1a1a;white-space:nowrap;transform:scaleX(0.935);transform-origin:50% 0;">09/25/2024</div>
<div style="position:absolute;left:496px;top:318.42px;width:70px;height:12.6px;box-sizing:border-box;border:1px solid #a2b6e3;border-radius:2px;background:#fff;"></div>
<div style="position:absolute;left:580.3px;top:317.92px;width:7.2px;height:5.5px;box-sizing:border-box;border:0.5px solid #e8e8e8;border-radius:1px;background:#fff;"></div>
<div style="position:absolute;left:794.8px;top:317.92px;width:7.2px;height:5.5px;box-sizing:border-box;border:0.5px solid #e8e8e8;border-radius:1px;background:#fff;"></div>
<div style="position:absolute;left:823.2px;top:316.02px;width:14.6px;height:11.2px;box-sizing:border-box;border:1px solid #e8909a;border-radius:2.5px;"></div>
<div style="position:absolute;left:730.50px;width:200px;text-align:center;top:319.86px;font-size:5.5px;line-height:5.5px;color:#222;white-space:nowrap;">X</div>
<div style="position:absolute;left:100px;top:334.68px;width:754px;height:21.36px;background:#fff;"></div>
<div style="position:absolute;left:17.75px;width:200px;text-align:center;top:339.77px;font-size:6.15px;line-height:6.15px;color:#1a1a1a;white-space:nowrap;transform:scaleX(0.935);transform-origin:50% 0;">13290</div>
<div style="position:absolute;left:139.30px;top:339.77px;font-size:6.15px;line-height:6.15px;color:#1a1a1a;white-space:nowrap;transform:scaleX(0.935);transform-origin:0 0;">Wind Meadows</div>
<div style="position:absolute;left:252.00px;top:339.77px;font-size:6.15px;line-height:6.15px;color:#1a1a1a;white-space:nowrap;transform:scaleX(0.935);transform-origin:0 0;">809</div>
<div style="position:absolute;left:277.50px;top:339.77px;font-size:6.15px;line-height:6.15px;color:#1a1a1a;white-space:nowrap;transform:scaleX(0.935);transform-origin:0 0;">E402G</div>
<div style="position:absolute;left:292.75px;width:200px;text-align:center;top:339.77px;font-size:6.15px;line-height:6.15px;color:#1a1a1a;white-space:nowrap;transform:scaleX(0.935);transform-origin:50% 0;">09/27/2024</div>
<div style="position:absolute;left:496px;top:339.78px;width:70px;height:12.6px;box-sizing:border-box;border:1px solid #a2b6e3;border-radius:2px;background:#fff;"></div>
<div style="position:absolute;left:580.3px;top:339.28px;width:7.2px;height:5.5px;box-sizing:border-box;border:0.5px solid #e8e8e8;border-radius:1px;background:#fff;"></div>
<div style="position:absolute;left:794.8px;top:339.28px;width:7.2px;height:5.5px;box-sizing:border-box;border:0.5px solid #e8e8e8;border-radius:1px;background:#fff;"></div>
<div style="position:absolute;left:823.2px;top:337.38px;width:14.6px;height:11.2px;box-sizing:border-box;border:1px solid #e8909a;border-radius:2.5px;"></div>
<div style="position:absolute;left:730.50px;width:200px;text-align:center;top:341.22px;font-size:5.5px;line-height:5.5px;color:#222;white-space:nowrap;">X</div>
<div style="position:absolute;left:100px;top:356.04px;width:754px;height:21.36px;background:#f2f2f2;"></div>
<div style="position:absolute;left:135.00px;top:356.04px;width:1px;height:21.36px;background:#f6f6f6;"></div>
<div style="position:absolute;left:247.90px;top:356.04px;width:1px;height:21.36px;background:#f6f6f6;"></div>
<div style="position:absolute;left:274.00px;top:356.04px;width:1px;height:21.36px;background:#f6f6f6;"></div>
<div style="position:absolute;left:361.00px;top:356.04px;width:1px;height:21.36px;background:#f6f6f6;"></div>
<div style="position:absolute;left:423.50px;top:356.04px;width:1px;height:21.36px;background:#f6f6f6;"></div>
<div style="position:absolute;left:493.00px;top:356.04px;width:1px;height:21.36px;background:#f6f6f6;"></div>
<div style="position:absolute;left:569.00px;top:356.04px;width:1px;height:21.36px;background:#f6f6f6;"></div>
<div style="position:absolute;left:597.50px;top:356.04px;width:1px;height:21.36px;background:#f6f6f6;"></div>
<div style="position:absolute;left:652.00px;top:356.04px;width:1px;height:21.36px;background:#f6f6f6;"></div>
<div style="position:absolute;left:717.00px;top:356.04px;width:1px;height:21.36px;background:#f6f6f6;"></div>
<div style="position:absolute;left:787.00px;top:356.04px;width:1px;height:21.36px;background:#f6f6f6;"></div>
<div style="position:absolute;left:820.00px;top:356.04px;width:1px;height:21.36px;background:#f6f6f6;"></div>
<div style="position:absolute;left:17.75px;width:200px;text-align:center;top:361.13px;font-size:6.15px;line-height:6.15px;color:#1a1a1a;white-space:nowrap;transform:scaleX(0.935);transform-origin:50% 0;">13289</div>
<div style="position:absolute;left:139.30px;top:361.13px;font-size:6.15px;line-height:6.15px;color:#1a1a1a;white-space:nowrap;transform:scaleX(0.935);transform-origin:0 0;">831 Harvard Ave</div>
<div style="position:absolute;left:252.00px;top:361.13px;font-size:6.15px;line-height:6.15px;color:#1a1a1a;white-space:nowrap;transform:scaleX(0.935);transform-origin:0 0;">811</div>
<div style="position:absolute;left:277.50px;top:361.13px;font-size:6.15px;line-height:6.15px;color:#1a1a1a;white-space:nowrap;transform:scaleX(0.935);transform-origin:0 0;">4EBBC</div>
<div style="position:absolute;left:292.75px;width:200px;text-align:center;top:361.13px;font-size:6.15px;line-height:6.15px;color:#1a1a1a;white-space:nowrap;transform:scaleX(0.935);transform-origin:50% 0;">09/27/2024</div>
<div style="position:absolute;left:496px;top:361.14px;width:70px;height:12.6px;box-sizing:border-box;border:1px solid #a2b6e3;border-radius:2px;background:#fff;"></div>
<div style="position:absolute;left:580.3px;top:360.64px;width:7.2px;height:5.5px;box-sizing:border-box;border:0.5px solid #e8e8e8;border-radius:1px;background:#fff;"></div>
<div style="position:absolute;left:794.8px;top:360.64px;width:7.2px;height:5.5px;box-sizing:border-box;border:0.5px solid #e8e8e8;border-radius:1px;background:#fff;"></div>
<div style="position:absolute;left:823.2px;top:358.74px;width:14.6px;height:11.2px;box-sizing:border-box;border:1px solid #e8909a;border-radius:2.5px;"></div>
<div style="position:absolute;left:730.50px;width:200px;text-align:center;top:362.58px;font-size:5.5px;line-height:5.5px;color:#222;white-space:nowrap;">X</div>
<div style="position:absolute;left:100px;top:377.40px;width:754px;height:21.36px;background:#fff;"></div>
<div style="position:absolute;left:17.75px;width:200px;text-align:center;top:382.49px;font-size:6.15px;line-height:6.15px;color:#1a1a1a;white-space:nowrap;transform:scaleX(0.935);transform-origin:50% 0;">13288</div>
<div style="position:absolute;left:139.30px;top:382.49px;font-size:6.15px;line-height:6.15px;color:#1a1a1a;white-space:nowrap;transform:scaleX(0.935);transform-origin:0 0;">Wind Meadows</div>
<div style="position:absolute;left:252.00px;top:382.49px;font-size:6.15px;line-height:6.15px;color:#1a1a1a;white-space:nowrap;transform:scaleX(0.935);transform-origin:0 0;">812</div>
<div style="position:absolute;left:277.50px;top:382.49px;font-size:6.15px;line-height:6.15px;color:#1a1a1a;white-space:nowrap;transform:scaleX(0.935);transform-origin:0 0;">E402G</div>
<div style="position:absolute;left:292.75px;width:200px;text-align:center;top:382.49px;font-size:6.15px;line-height:6.15px;color:#1a1a1a;white-space:nowrap;transform:scaleX(0.935);transform-origin:50% 0;">09/27/2024</div>
<div style="position:absolute;left:496px;top:382.50px;width:70px;height:12.6px;box-sizing:border-box;border:1px solid #a2b6e3;border-radius:2px;background:#fff;"></div>
<div style="position:absolute;left:580.3px;top:382.00px;width:7.2px;height:5.5px;box-sizing:border-box;border:0.5px solid #e8e8e8;border-radius:1px;background:#fff;"></div>
<div style="position:absolute;left:794.8px;top:382.00px;width:7.2px;height:5.5px;box-sizing:border-box;border:0.5px solid #e8e8e8;border-radius:1px;background:#fff;"></div>
<div style="position:absolute;left:823.2px;top:380.10px;width:14.6px;height:11.2px;box-sizing:border-box;border:1px solid #e8909a;border-radius:2.5px;"></div>
<div style="position:absolute;left:730.50px;width:200px;text-align:center;top:383.94px;font-size:5.5px;line-height:5.5px;color:#222;white-space:nowrap;">X</div>
<div style="position:absolute;left:100px;top:398.5px;width:754px;height:1px;background:#eeeeee;"></div>
<div style="position:absolute;left:100px;top:418px;width:754px;height:1px;background:#e4e4e4;"></div>
<div style="position:absolute;left:99.80px;top:431.77px;font-size:5.7px;line-height:5.7px;color:#777;white-space:nowrap;">Records: 38</div>
<div style="position:absolute;left:413.90px;top:431.77px;font-size:5.7px;line-height:5.7px;color:#777;white-space:nowrap;">Records per page:</div>
<div style="position:absolute;left:463.2px;top:425.2px;width:34.3px;height:15.6px;box-sizing:border-box;border:1px solid #e3e3e3;border-radius:2px;background:#fff;"></div>
<div style="position:absolute;left:468.70px;top:431.44px;font-size:6.1px;line-height:6.1px;color:#2a3550;white-space:nowrap;">100</div>
<svg style="position:absolute;left:486px;top:430.5px" width="7" height="5" viewBox="0 0 7 5"><path d="M1.3 1.2 L3.4 3.2 L5.5 1.2" stroke="#222" stroke-width="1.1" fill="none"/></svg>
<div style="position:absolute;left:782px;top:425px;width:72px;height:16px;background:#e9ecef;border-radius:2px;"></div>
<div style="position:absolute;left:816.2px;top:425px;width:14.8px;height:16px;background:#0d6efd;"></div>
<div style="position:absolute;left:788.00px;top:430.64px;font-size:6.1px;line-height:6.1px;color:#4f74e8;white-space:nowrap;">Previous</div>
<div style="position:absolute;left:723.60px;width:200px;text-align:center;top:430.64px;font-size:6.1px;line-height:6.1px;color:#fff;white-space:nowrap;font-weight:bold;">1</div>
<div style="position:absolute;left:835.80px;top:430.64px;font-size:6.1px;line-height:6.1px;color:#6c757d;white-space:nowrap;">Next</div>
</body></html>
